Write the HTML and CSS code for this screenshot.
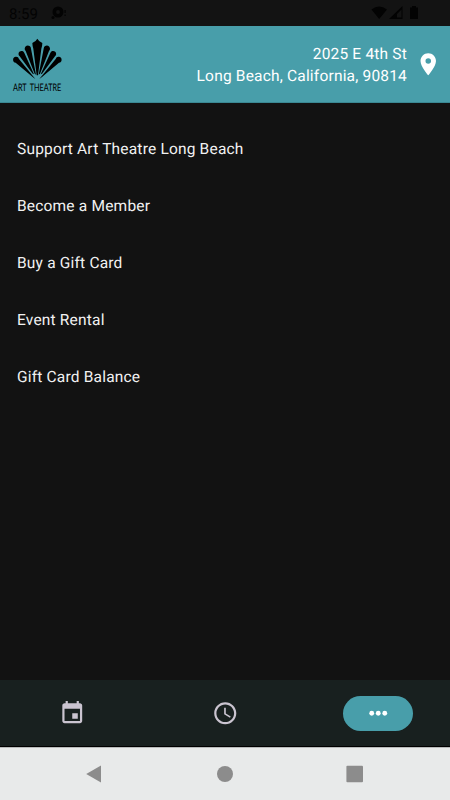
FILE: index.html
```html
<!DOCTYPE html>
<html lang="en">
<head>
    <meta charset="UTF-8">
    <meta name="viewport" content="width=device-width, initial-scale=1.0">
    <title>Art Theatre</title>
    <link rel="stylesheet" href="styles.css">
</head>
<body>
    <div class="status-bar">
        <span class="time">8:59</span>
        <svg class="status-alert" width="18" height="14" viewBox="0 0 18 14">
            <circle cx="7" cy="6" r="3.700" fill="none" stroke="currentColor" stroke-width="3.600"/>
            <circle cx="2" cy="11.500" r="1.500"/>
            <path d="M13.500 4h1.200v3h-1.200zM13.500 8.500h1.200v1.500h-1.200z"/>
        </svg>
        <svg class="status-icons" width="50" height="16" viewBox="0 0 50 16">
            <path d="M0.500 4.500Q8 -1.500 16 4.500L8.200 14z"/>
            <path fill-rule="evenodd" d="M18 14L31.500 1v13zM26 12.500h4.500v-8l-4.500 4.500z"/>
            <path d="M39 2.500h2V1h4v1.500h2V14h-8z"/>
        </svg>
    </div>
    <header>
        <svg class="logo" width="80" height="76" viewBox="0 0 240 228">
            <path d="M112 38Q116 46 127 51Q127 58 124 68L114 148H110L100 68Q97 58 97 51Q108 46 112 38z"/>
            <path d="M77 75A9.500 9.500 0 1 1 93 68L108 146L104 143z"/>
            <path d="M147 75A9.500 9.500 0 1 0 131 68L116 146L120 143z"/>
            <path d="M59 91A9 9 0 1 1 73 81L102 145L98 143z"/>
            <path d="M165 91A9 9 0 1 0 151 81L122 145L126 143z"/>
            <path d="M47 110A9 9 0 1 1 57 99L106 159L98 153z"/>
            <path d="M177 110A9 9 0 1 0 167 99L118 159L126 153z"/>
            <text x="39" y="194" word-spacing="7" textLength="145" lengthAdjust="spacingAndGlyphs">ART THEATRE</text>
        </svg>
        <div class="address">2025 E 4th St<br>Long Beach, California, 90814</div>
        <svg class="icon" viewBox="0 0 24 24">
            <path d="M12 2C8.130 2 5 5.130 5 9c0 5.250 7 13 7 13s7-7.750 7-13c0-3.870-3.130-7-7-7zm0 9.500a2.500 2.500 0 0 1 0-5 2.500 2.500 0 0 1 0 5z"/>
        </svg>
    </header>
    <main>
        <a class="menu-item">Support Art Theatre Long Beach</a>
        <a class="menu-item">Become a Member</a>
        <a class="menu-item">Buy a Gift Card</a>
        <a class="menu-item">Event Rental</a>
        <a class="menu-item">Gift Card Balance</a>
    </main>
    <nav class="tabs">
        <div class="tab">
            <svg class="icon" viewBox="0 0 24 24">
                <path d="M17 12h-5v5h5v-5zM16 1v2H8V1H6v2H5c-1.110 0-1.990.9-1.990 2L3 19c0 1.100.89 2 2 2h14c1.100 0 2-.9 2-2V5c0-1.100-.9-2-2-2h-1V1h-2zm3 18H5V8h14v11z"/>
            </svg>
        </div>
        <div class="tab">
            <svg class="icon" viewBox="0 0 24 24">
                <path d="M11.990 2C6.470 2 2 6.480 2 12s4.470 10 9.990 10C17.520 22 22 17.520 22 12S17.520 2 11.990 2zM12 20c-4.420 0-8-3.580-8-8s3.580-8 8-8 8 3.580 8 8-3.580 8-8 8zm.5-13H11v6l5.250 3.150.75-1.230-4.500-2.670z"/>
            </svg>
        </div>
        <div class="tab active">
            <svg class="icon" viewBox="0 0 24 24">
                <circle cx="6.100" cy="12" r="2.200"/>
                <circle cx="12" cy="12" r="2.200"/>
                <circle cx="17.900" cy="12" r="2.200"/>
            </svg>
        </div>
    </nav>
    <div class="system-nav">
        <svg width="18" height="18" viewBox="0 0 18 18"><path d="M1.200 9L16 .5v17z"/></svg>
        <svg width="18" height="18" viewBox="0 0 18 18"><circle cx="9" cy="9" r="8"/></svg>
        <svg width="18" height="18" viewBox="0 0 18 18"><rect x=".4" y=".7" width="16.600" height="16.600" rx="1"/></svg>
    </div>
</body>
</html>
```
FILE: styles.css
```css
body {
    margin: 0;
    height: 800px;
    display: flex;
    flex-direction: column;
    overflow: hidden;
    background-color: #121212;
    color: #f1f1f1;
    font-family: Roboto, "Liberation Sans", sans-serif;
    text-rendering: geometricPrecision;
}
svg {
    display: block;
    fill: currentColor;
}
.status-bar {
    box-sizing: border-box;
    height: 26px;
    padding: 0 29px 0 9px;
    display: flex;
    align-items: center;
    background-color: #131313;
    color: #030303;
}
.time {
    width: 42px;
    padding-top: 2px;
    font-size: 15px;
    line-height: 26px;
}
.status-icons {
    margin-left: auto;
}
header {
    box-sizing: border-box;
    height: 77px;
    padding-right: 9px;
    display: flex;
    align-items: center;
    background-color: #489eaa;
    border-bottom: 1px solid #3b8893;
    color: #fff;
}
.logo {
    color: #000;
}
.logo text {
    font-family: Lato, sans-serif;
    font-size: 31px;
}
.address {
    flex: 1;
    padding-top: 1px;
    margin-right: 7.500px;
    text-align: right;
    font-size: 15.500px;
    line-height: 22px;
    letter-spacing: 0.19px;
}
.icon {
    width: 26.500px;
    height: 26.500px;
}
main {
    flex: 1;
    padding-top: 18px;
}
.menu-item {
    display: block;
    padding-left: 17px;
    line-height: 57px;
    font-size: 15.500px;
    letter-spacing: 0.19px;
}
.tabs {
    box-sizing: border-box;
    height: 67px;
    padding: 0 37px;
    display: flex;
    align-items: center;
    justify-content: space-between;
    background-color: #18201f;
    border-bottom: 1px solid #000;
}
.tab {
    width: 70px;
    height: 35px;
    display: flex;
    align-items: center;
    justify-content: center;
    border-radius: 18px;
    color: #cac4d0;
}
.tab.active {
    background-color: #489eaa;
    color: #fff;
}
.system-nav {
    box-sizing: border-box;
    height: 53px;
    padding: 0 86px 0 85px;
    display: flex;
    align-items: center;
    justify-content: space-between;
    background-color: #e8eaea;
    border-top: 1px solid #b9bbbb;
    color: #8c8c8c;
}
```
